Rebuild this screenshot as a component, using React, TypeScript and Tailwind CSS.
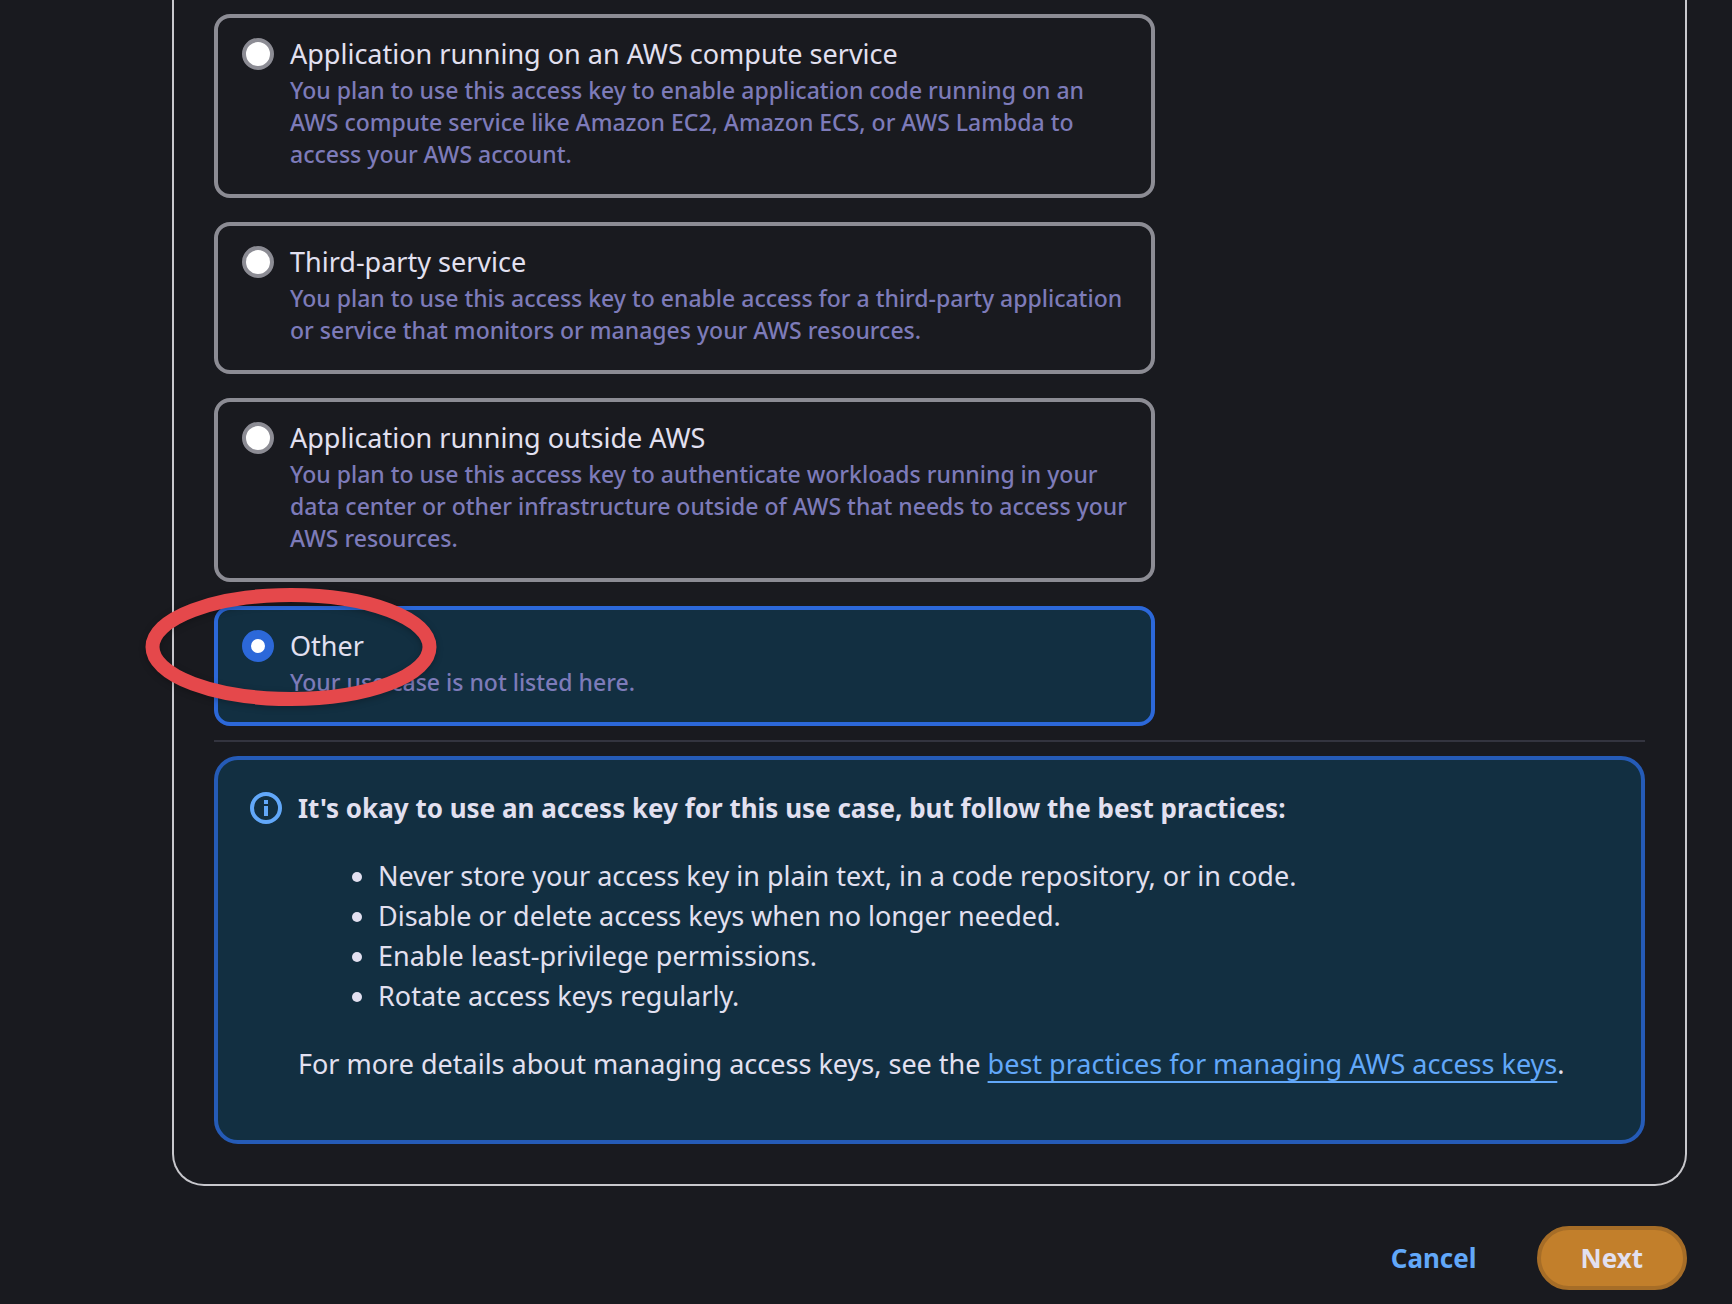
import { useState } from "react";

type Option = { id: string; title: string; description: string };

const options: Option[] = [
  {
    id: "compute",
    title: "Application running on an AWS compute service",
    description:
      "You plan to use this access key to enable application code running on an AWS compute service like Amazon EC2, Amazon ECS, or AWS Lambda to access your AWS account.",
  },
  {
    id: "third-party",
    title: "Third-party service",
    description:
      "You plan to use this access key to enable access for a third-party application or service that monitors or manages your AWS resources.",
  },
  {
    id: "outside",
    title: "Application running outside AWS",
    description:
      "You plan to use this access key to authenticate workloads running in your data center or other infrastructure outside of AWS that needs to access your AWS resources.",
  },
  { id: "other", title: "Other", description: "Your use case is not listed here." },
];

const practices = [
  "Never store your access key in plain text, in a code repository, or in code.",
  "Disable or delete access keys when no longer needed.",
  "Enable least-privilege permissions.",
  "Rotate access keys regularly.",
];

function Highlight() {
  return (
    <svg
      className="pointer-events-none absolute -left-[73px] -top-[22px] h-[126px] w-[300px] overflow-visible drop-shadow-[0_2px_3px_rgba(0,0,0,0.25)]"
      viewBox="0 0 300 126"
      fill="none"
      aria-hidden="true"
    >
      <ellipse cx="146" cy="59" rx="138.5" ry="52" stroke="#e5484b" strokeWidth="14" />
    </svg>
  );
}

function OptionTile({ option, checked, onSelect }: { option: Option; checked: boolean; onSelect: () => void }) {
  return (
    <div
      className={
        checked
          ? "relative rounded-2xl border-4 border-[#2c68d9] bg-[#122f41]"
          : "relative rounded-2xl border-4 border-[#8c8c94]"
      }
    >
      <label htmlFor={option.id} className="flex cursor-pointer gap-4 px-6 pt-4 pb-6">
        <input
          type="radio"
          id={option.id}
          name="use-case"
          checked={checked}
          onChange={onSelect}
          aria-describedby={option.id + "-description"}
          className="mt-1 size-8 shrink-0 appearance-none rounded-full border-4 border-[#8c8c94] bg-white checked:border-[9px] checked:border-[#2c68d9]"
        />
        <span className="flex min-w-0 flex-col">
          <span className="text-[27px] leading-10">{option.title}</span>
          <span id={option.id + "-description"} className="text-[23px] leading-8 font-medium text-[#7d7bb9]">
            {option.description}
          </span>
        </span>
      </label>
      {option.id === "other" && <Highlight />}
    </div>
  );
}

export default function App() {
  const [selected, setSelected] = useState("other");

  return (
    <main className="min-h-screen bg-[#191a1f] pr-[45px] pb-3.5 pl-[172px] font-['Noto_Sans',sans-serif] text-[#e2e0f0]">
      <section className="rounded-b-[32px] border-2 border-t-0 border-[#c8c8cd] px-10 pt-3.5 pb-10">
        <fieldset className="flex w-[941px] max-w-full flex-col gap-6" aria-label="Use case">
          {options.map((o) => (
            <OptionTile key={o.id} option={o} checked={selected === o.id} onSelect={() => setSelected(o.id)} />
          ))}
        </fieldset>

        <hr className="my-3.5 border-t-2 border-[#33343f]" />

        <div className="flex gap-4 rounded-3xl border-4 border-[#255bb7] bg-[#122f41] px-8 py-7">
          <svg className="mt-1 size-8 shrink-0" viewBox="0 0 32 32" fill="none" aria-hidden="true">
            <circle cx="16" cy="16" r="14" stroke="#62a8f9" strokeWidth="4" />
            <path d="M14 8h4v4h-4zM14 14h4v10h-4z" fill="#62a8f9" />
          </svg>
          <div className="flex min-w-0 flex-col gap-7 pb-7 text-[27px] leading-10">
            <strong className="text-[26px] font-bold">
              It's okay to use an access key for this use case, but follow the best practices:
            </strong>
            <ul className="list-disc pl-20">
              {practices.map((p) => (
                <li key={p}>{p}</li>
              ))}
            </ul>
            <p>
              For more details about managing access keys, see the{" "}
              <a href="#best-practices" className="text-[#62a8f9] underline decoration-2 underline-offset-[7px]">
                best practices for managing AWS access keys
              </a>
              .
            </p>
          </div>
        </div>
      </section>

      <div className="mt-10 flex justify-end gap-4 text-[26px] leading-10 font-bold">
        <button type="button" className="h-16 rounded-full px-11 text-[#62a8f9]">
          Cancel
        </button>
        <button type="button" className="h-16 rounded-full border-4 border-[#a66d27] bg-[#c27f2b] px-10">
          Next
        </button>
      </div>
    </main>
  );
}
